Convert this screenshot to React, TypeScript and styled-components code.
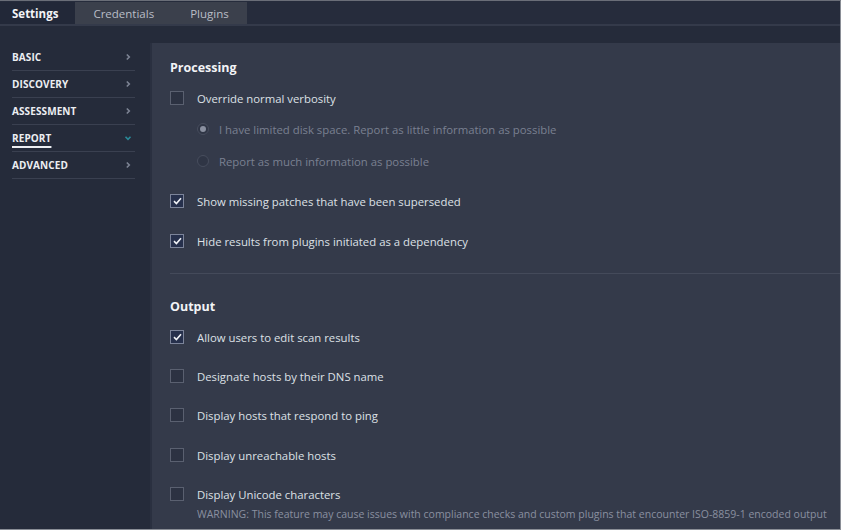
import React from "react";
import styled, { createGlobalStyle } from "styled-components";

const Global = createGlobalStyle`
  html, body { margin: 0; padding: 0; background: #ffffff; }
  body { font-family: "Open Sans", "Noto Sans", sans-serif; }
  * { box-sizing: border-box; }
`;

const Frame = styled.div`
  width: 841px;
  height: 530px;
  background: #262b3a;
  border-top: 1px solid #6a6e78;
  border-right: 1px solid #8a8e96;
  border-bottom: 1px solid #8a8e96;
  display: flex;
  flex-direction: column;
  overflow: hidden;
`;

const TabBar = styled.div`
  height: 25px;
  display: flex;
  align-items: stretch;
  background: #262c3c;
  border-bottom: 2px solid #343a4a;
  padding-top: 1px;
`;

const Tab = styled.div<{ $active?: boolean }>`
  display: flex;
  align-items: center;
  padding: 0 18px;
  font-size: 11.5px;
  font-weight: ${(p) => (p.$active ? 700 : 400)};
  color: ${(p) => (p.$active ? "#f3f4f7" : "#b9bdc7")};
  background: ${(p) => (p.$active ? "#222838" : "#3b404c")};
  &:first-child {
    padding: 0 17px 0 12px;
  }
`;

const Body = styled.div`
  flex: 1;
  display: flex;
  padding-top: 17px;
  background: #252b3a;
  min-height: 0;
`;

const Sidebar = styled.nav`
  width: 152px;
  flex-shrink: 0;
  padding: 1px 15px 0 12px;
  border-right: 2px solid #2a3040;
`;

const NavItem = styled.div`
  height: 27px;
  display: flex;
  align-items: center;
  justify-content: space-between;
  border-bottom: 1px solid #3a4050;
  padding-right: 3px;
`;

const NavLabel = styled.span<{ $active?: boolean }>`
  font-size: 10px;
  font-weight: 700;
  color: #eceef2;
  letter-spacing: 0.1px;
  text-decoration: ${(p) => (p.$active ? "underline" : "none")};
  text-underline-offset: 4px;
  text-decoration-thickness: 1.5px;
`;

const Chevron = styled.svg<{ $active?: boolean }>`
  width: 8px;
  height: 8px;
  stroke: ${(p) => (p.$active ? "#2a8a98" : "#7d8494")};
  stroke-width: 1.6;
  fill: none;
`;

const Main = styled.main`
  flex: 1;
  background: #343a4a;
  padding: 15px 0 0 18px;
  display: flex;
  flex-direction: column;
`;

const Heading = styled.h2<{ $gap?: number }>`
  margin: ${(p) => p.$gap ?? 0}px 0 0 0;
  height: 20px;
  line-height: 20px;
  font-size: 12.5px;
  font-weight: 700;
  color: #f2f3f6;
`;

const Row = styled.label<{ $gap: number; $indent?: boolean; $disabled?: boolean }>`
  display: flex;
  align-items: center;
  height: 22px;
  margin-top: ${(p) => p.$gap}px;
  padding-left: ${(p) => (p.$indent ? 27 : 0)}px;
  gap: ${(p) => (p.$indent ? 10 : 13)}px;
  font-size: 11.35px;
  color: ${(p) => (p.$disabled ? "#7a8091" : "#dde0e6")};
`;

const Box = styled.span<{ $checked?: boolean }>`
  width: 14px;
  height: 14px;
  flex-shrink: 0;
  border: 1px solid ${(p) => (p.$checked ? "#7c849a" : "#5a6070")};
  background: ${(p) => (p.$checked ? "#26304c" : "#2c3242")};
  display: flex;
  align-items: center;
  justify-content: center;
`;

const Radio = styled.span<{ $checked?: boolean }>`
  width: 12px;
  height: 12px;
  flex-shrink: 0;
  border-radius: 50%;
  border: 1px solid #474d5d;
  background: #2f3545;
  display: flex;
  align-items: center;
  justify-content: center;
  &::after {
    content: "";
    width: 6px;
    height: 6px;
    border-radius: 50%;
    background: ${(p) => (p.$checked ? "#8a90a0" : "transparent")};
  }
`;

const Divider = styled.hr`
  margin: 21px 0 0 0;
  border: 0;
  border-top: 1px solid #444a5a;
  height: 0;
`;

const Warning = styled.div`
  padding-left: 27px;
  margin-top: 1px;
  font-size: 10.5px;
  color: #8a90a0;
  line-height: 16px;
  white-space: nowrap;
`;

const Check = () => (
  <svg width="9" height="8" viewBox="0 0 9 8">
    <path d="M1 4.2 L3.4 6.5 L8 1.2" stroke="#f0f2f6" strokeWidth="1.6" fill="none" />
  </svg>
);

const CheckRow = ({ label, checked, gap }: { label: string; checked?: boolean; gap: number }) => (
  <Row $gap={gap}>
    <Box $checked={checked}>{checked && <Check />}</Box>
    <span>{label}</span>
  </Row>
);

const navItems = [
  { label: "BASIC" },
  { label: "DISCOVERY" },
  { label: "ASSESSMENT" },
  { label: "REPORT", active: true },
  { label: "ADVANCED" },
];

export default function App() {
  return (
    <>
      <Global />
      <Frame>
        <TabBar>
          <Tab $active>Settings</Tab>
          <Tab>Credentials</Tab>
          <Tab>Plugins</Tab>
        </TabBar>
        <Body>
          <Sidebar>
            {navItems.map((n) => (
              <NavItem key={n.label}>
                <NavLabel $active={n.active}>{n.label}</NavLabel>
                <Chevron $active={n.active} viewBox="0 0 8 8">
                  {n.active ? <path d="M1.5 2.8 L4 5.3 L6.5 2.8" /> : <path d="M2.8 1.5 L5.3 4 L2.8 6.5" />}
                </Chevron>
              </NavItem>
            ))}
          </Sidebar>
          <Main>
            <Heading>Processing</Heading>
            <CheckRow gap={9} label="Override normal verbosity" />
            <Row $gap={9} $indent $disabled>
              <Radio $checked />
              <span>I have limited disk space. Report as little information as possible</span>
            </Row>
            <Row $gap={10} $indent $disabled>
              <Radio />
              <span>Report as much information as possible</span>
            </Row>
            <CheckRow gap={18} checked label="Show missing patches that have been superseded" />
            <CheckRow gap={18} checked label="Hide results from plugins initiated as a dependency" />
            <Divider />
            <Heading $gap={23}>Output</Heading>
            <CheckRow gap={9} checked label="Allow users to edit scan results" />
            <CheckRow gap={17} label="Designate hosts by their DNS name" />
            <CheckRow gap={17} label="Display hosts that respond to ping" />
            <CheckRow gap={18} label="Display unreachable hosts" />
            <CheckRow gap={17} label="Display Unicode characters" />
            <Warning>
              WARNING: This feature may cause issues with compliance checks and custom plugins that encounter ISO-8859-1 encoded output
            </Warning>
          </Main>
        </Body>
      </Frame>
    </>
  );
}
